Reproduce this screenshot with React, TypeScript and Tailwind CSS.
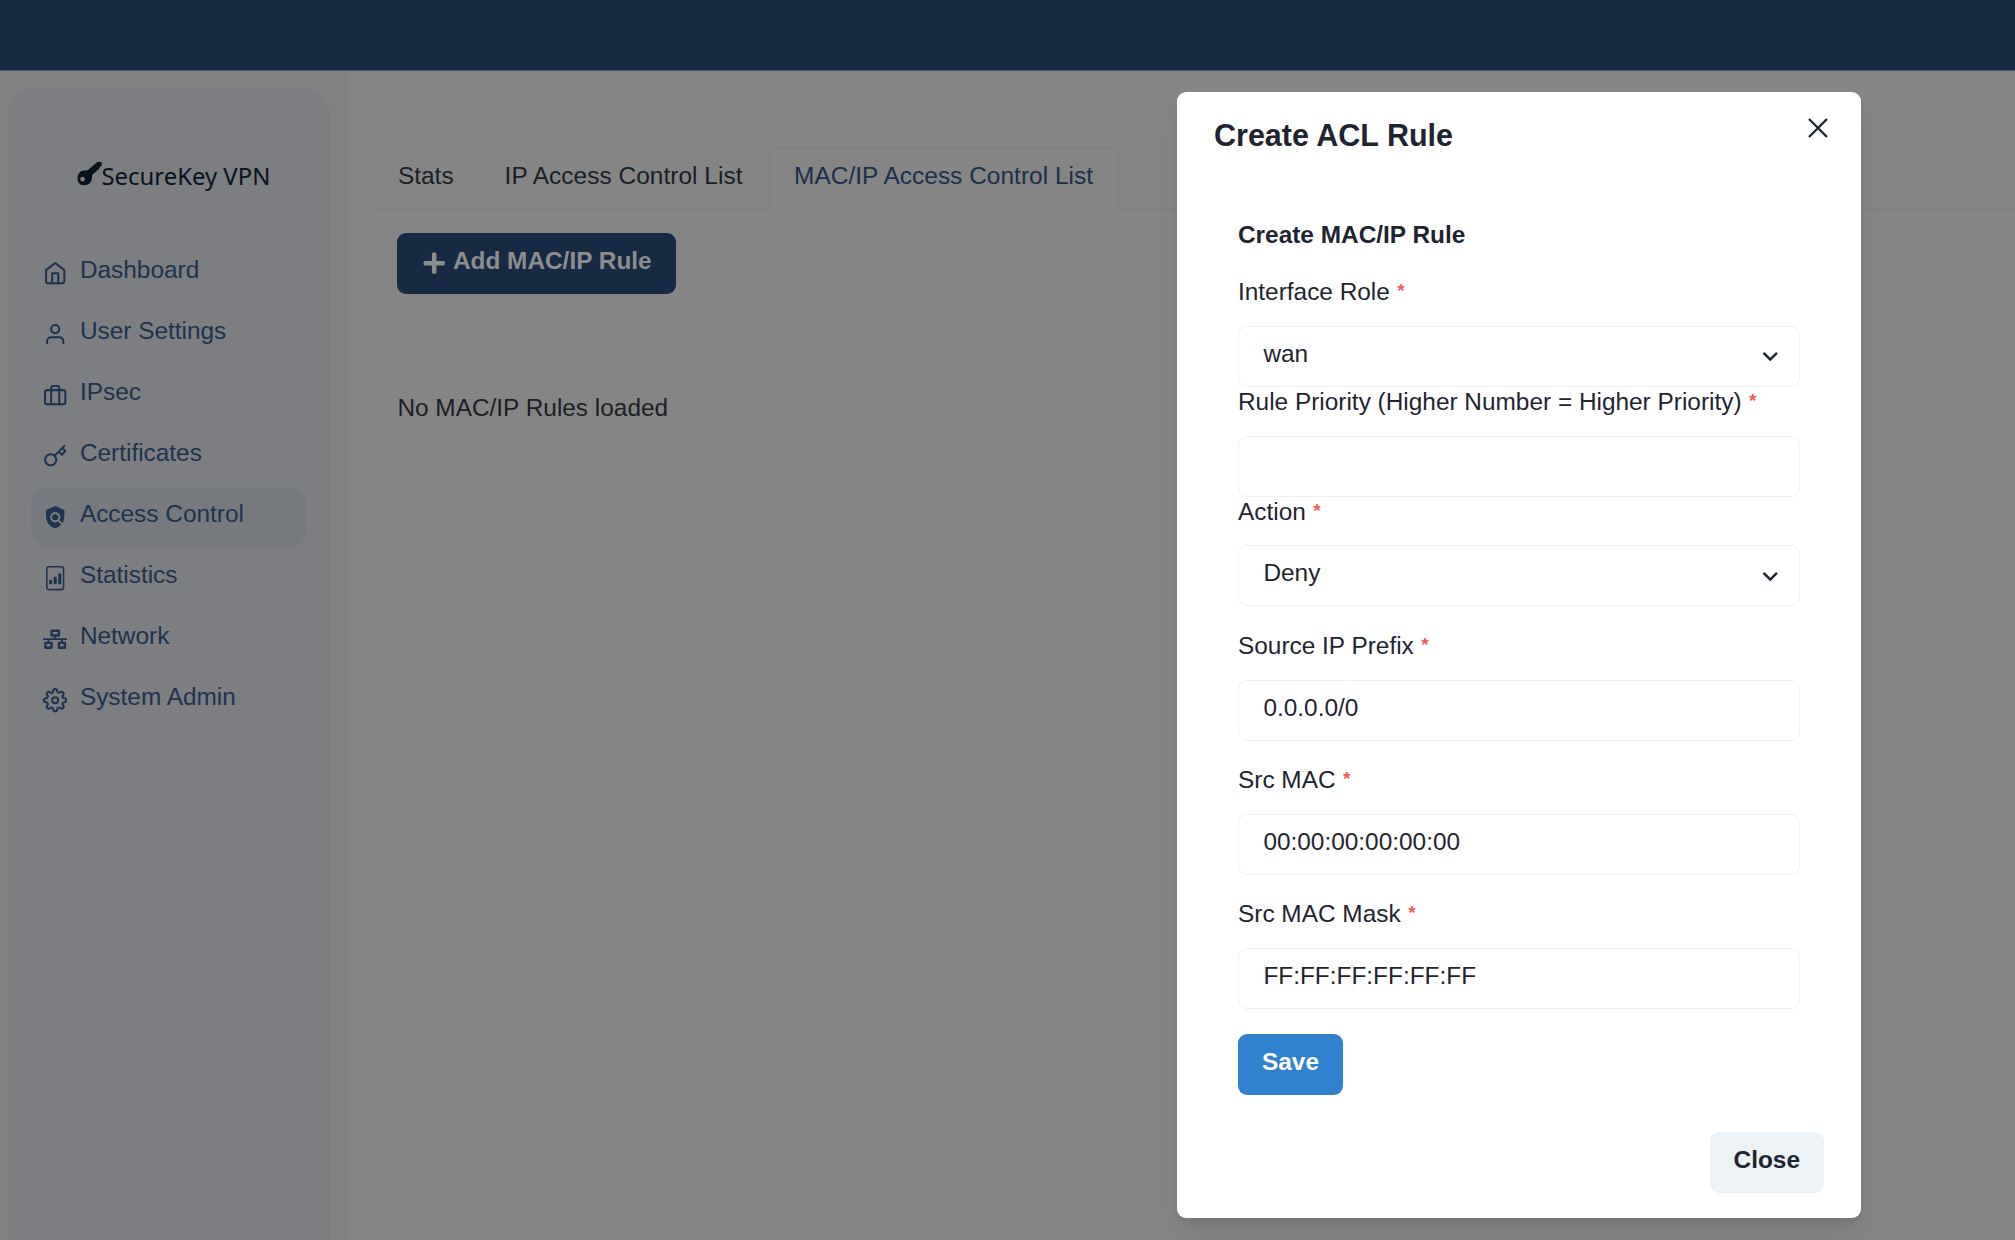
import type { ReactNode } from "react";
import type { IconType } from "react-icons";
import { BsFileBarGraph } from "react-icons/bs";
import { FaNetworkWired, FaPlus } from "react-icons/fa";
import { FiBriefcase, FiHome, FiKey, FiSettings, FiUser } from "react-icons/fi";
import { MdPolicy } from "react-icons/md";

const NAV: { label: string; icon: IconType; active?: boolean }[] = [
  { label: "Dashboard", icon: FiHome },
  { label: "User Settings", icon: FiUser },
  { label: "IPsec", icon: FiBriefcase },
  { label: "Certificates", icon: FiKey },
  { label: "Access Control", icon: MdPolicy, active: true },
  { label: "Statistics", icon: BsFileBarGraph },
  { label: "Network", icon: FaNetworkWired },
  { label: "System Admin", icon: FiSettings },
];

function Logo() {
  return (
    <div className="mt-[67px] flex h-[36px] items-start pl-[70px] text-[#07131e]">
      <svg viewBox="0 0 24 24" className="mt-[4px] size-[25px] shrink-0" fill="currentColor">
        <path
          fillRule="evenodd"
          d="M19.8.6 23.4.9 23.9 4.4 22 5.8 21.1 7.9 19.2 8.9 18.3 10.6 16.4 11.6 14.4 13.6C15.2 18.6 12.5 23 7 23.3 2.8 23.3.3 20.2.5 16.2.8 11.4 3.7 8.8 8.4 9.2L10.6 8.6ZM5.3 15.2a2.2 2.2 0 1 0 0 4.4 2.2 2.2 0 0 0 0-4.4Z"
        />
      </svg>
      <span className="font-['Noto_Sans'] text-[23.9px] leading-[38px] whitespace-nowrap">SecureKey VPN</span>
    </div>
  );
}

function Sidebar() {
  return (
    <aside className="w-[349px] shrink-0 bg-[#828282] pt-[18px] pl-[6.5px]">
      <div className="h-full w-[323.5px] rounded-t-[24px] bg-[#7d7e82] pt-px">
        <Logo />
        <nav className="mt-[50px] flex flex-col pr-[24.5px] pl-[24.5px]">
          {NAV.map(({ label, icon: Icon, active }) => (
            <a
              key={label}
              className={`flex h-[61px] items-center rounded-[18px] pl-[12px] text-[#1f334f] ${active ? "bg-[#767a7e]" : ""}`}
            >
              <Icon className="size-[24.4px] shrink-0" />
              <span className="ml-[12.5px] pb-[7px] whitespace-nowrap">{label}</span>
            </a>
          ))}
        </nav>
      </div>
    </aside>
  );
}

function Main() {
  return (
    <main className="min-w-0 flex-1 pt-[76px] pl-[24px] text-[#1b1f26]">
      <div className="flex h-[63px] whitespace-nowrap">
        <div className="flex items-center border-b-[1.5px] border-[#7c7d7f] pr-[25.5px] pb-[5px] pl-[25px]">Stats</div>
        <div className="flex w-[290px] items-center border-b-[1.5px] border-[#7c7d7f] pb-[5px] pl-[25.5px]">
          <span className="tracking-[0.05px]">IP Access Control List</span>
        </div>
        <div className="flex w-[349.5px] items-center rounded-t-[9px] border-x border-t border-[#7c7e80] pb-[7px] pl-[24px] text-[#1b2f4b]">
          <span className="tracking-[0.05px]">MAC/IP Access Control List</span>
        </div>
        <div className="flex-1 border-b border-[#7c7d7f]" />
      </div>
      <div className="pt-[22.5px] pl-[24.4px]">
        <button className="flex h-[61px] w-[279px] items-center rounded-[9px] bg-[#172a44] pl-[24.6px] font-bold text-[#8c8d8f]">
          <FaPlus className="size-[24.4px]" />
          <span className="ml-[6.5px] pb-[4px] whitespace-nowrap">Add MAC/IP Rule</span>
        </button>
        <p className="mt-[96px] leading-[36px]">No MAC/IP Rules loaded</p>
      </div>
    </main>
  );
}

function Field({ label, value, select, className = "" }: { label: string; value?: string; select?: boolean; className?: string }) {
  return (
    <div className={className}>
      <div className="flex h-[48.8px] pb-[17.2px] leading-[30.4px] whitespace-nowrap">
        {label}
        <span className="ml-[7.5px] text-[19px] leading-[27px] font-bold text-[#ec5f5f]">*</span>
      </div>
      <div className="flex h-[61px] items-center justify-between rounded-[9px] border-[1.5px] border-[#edf2f7] pr-[14px] pl-[24.4px]">
        <span className="pb-[5px]">{value}</span>
        {select && (
          <svg viewBox="0 0 24 24" className="size-[30.5px]" fill="currentColor">
            <path d="M16.59 8.59 12 13.17 7.41 8.59 6 10l6 6 6-6z" />
          </svg>
        )}
      </div>
    </div>
  );
}

function Dialog({ children }: { children: ReactNode }) {
  return (
    <section className="absolute top-[91.5px] left-[1177px] flex h-[1126px] w-[684px] flex-col rounded-[9px] bg-white text-[#1f2530] shadow-[0_15px_23px_-5px_rgba(0,0,0,0.1),0_6px_9px_-3px_rgba(0,0,0,0.06)]">
      <header className="flex h-[108px] items-start justify-between pt-[23px] pr-[33px] pl-[37px]">
        <h2 className="text-[30.5px] leading-[40px] font-bold">Create ACL Rule</h2>
        <svg viewBox="0 0 20 20" className="mt-[3.5px] size-[20px]" stroke="currentColor" strokeWidth="2.4" fill="none">
          <path d="m1 1 18 18M19 1 1 19" />
        </svg>
      </header>
      {children}
      <footer className="mt-[37px] flex justify-end pr-[37px]">
        <button className="flex h-[61px] w-[114.5px] items-center justify-center rounded-[9px] bg-[#edf2f6] pb-[5px] font-bold">
          Close
        </button>
      </footer>
    </section>
  );
}

export default function App() {
  return (
    <div className="relative flex h-[1240px] w-[2015px] flex-col overflow-hidden bg-[#858585] font-['Liberation_Sans',sans-serif] text-[24.4px] leading-[36px]">
      <div className="h-[71px] shrink-0 border-b border-[#4b566b] bg-[#172a44]" />
      <div className="flex flex-1">
        <Sidebar />
        <Main />
      </div>
      <Dialog>
        <form className="px-[61px] pt-[16px]">
          <h3 className="h-[61.5px] leading-[38px] font-bold">Create MAC/IP Rule</h3>
          <Field label="Interface Role" value="wan" select />
          <Field label="Rule Priority (Higher Number = Higher Priority)" />
          <Field label="Action" value="Deny" select />
          <Field label="Source IP Prefix" value="0.0.0.0/0" className="mt-[24.5px]" />
          <Field label="Src MAC" value="00:00:00:00:00:00" className="mt-[24.5px]" />
          <Field label="Src MAC Mask" value="FF:FF:FF:FF:FF:FF" className="mt-[24.5px]" />
          <button className="mt-[24.5px] flex h-[61px] w-[105px] items-center justify-center rounded-[9px] bg-[#3182ce] pb-[5px] font-bold text-white">
            Save
          </button>
        </form>
      </Dialog>
    </div>
  );
}
